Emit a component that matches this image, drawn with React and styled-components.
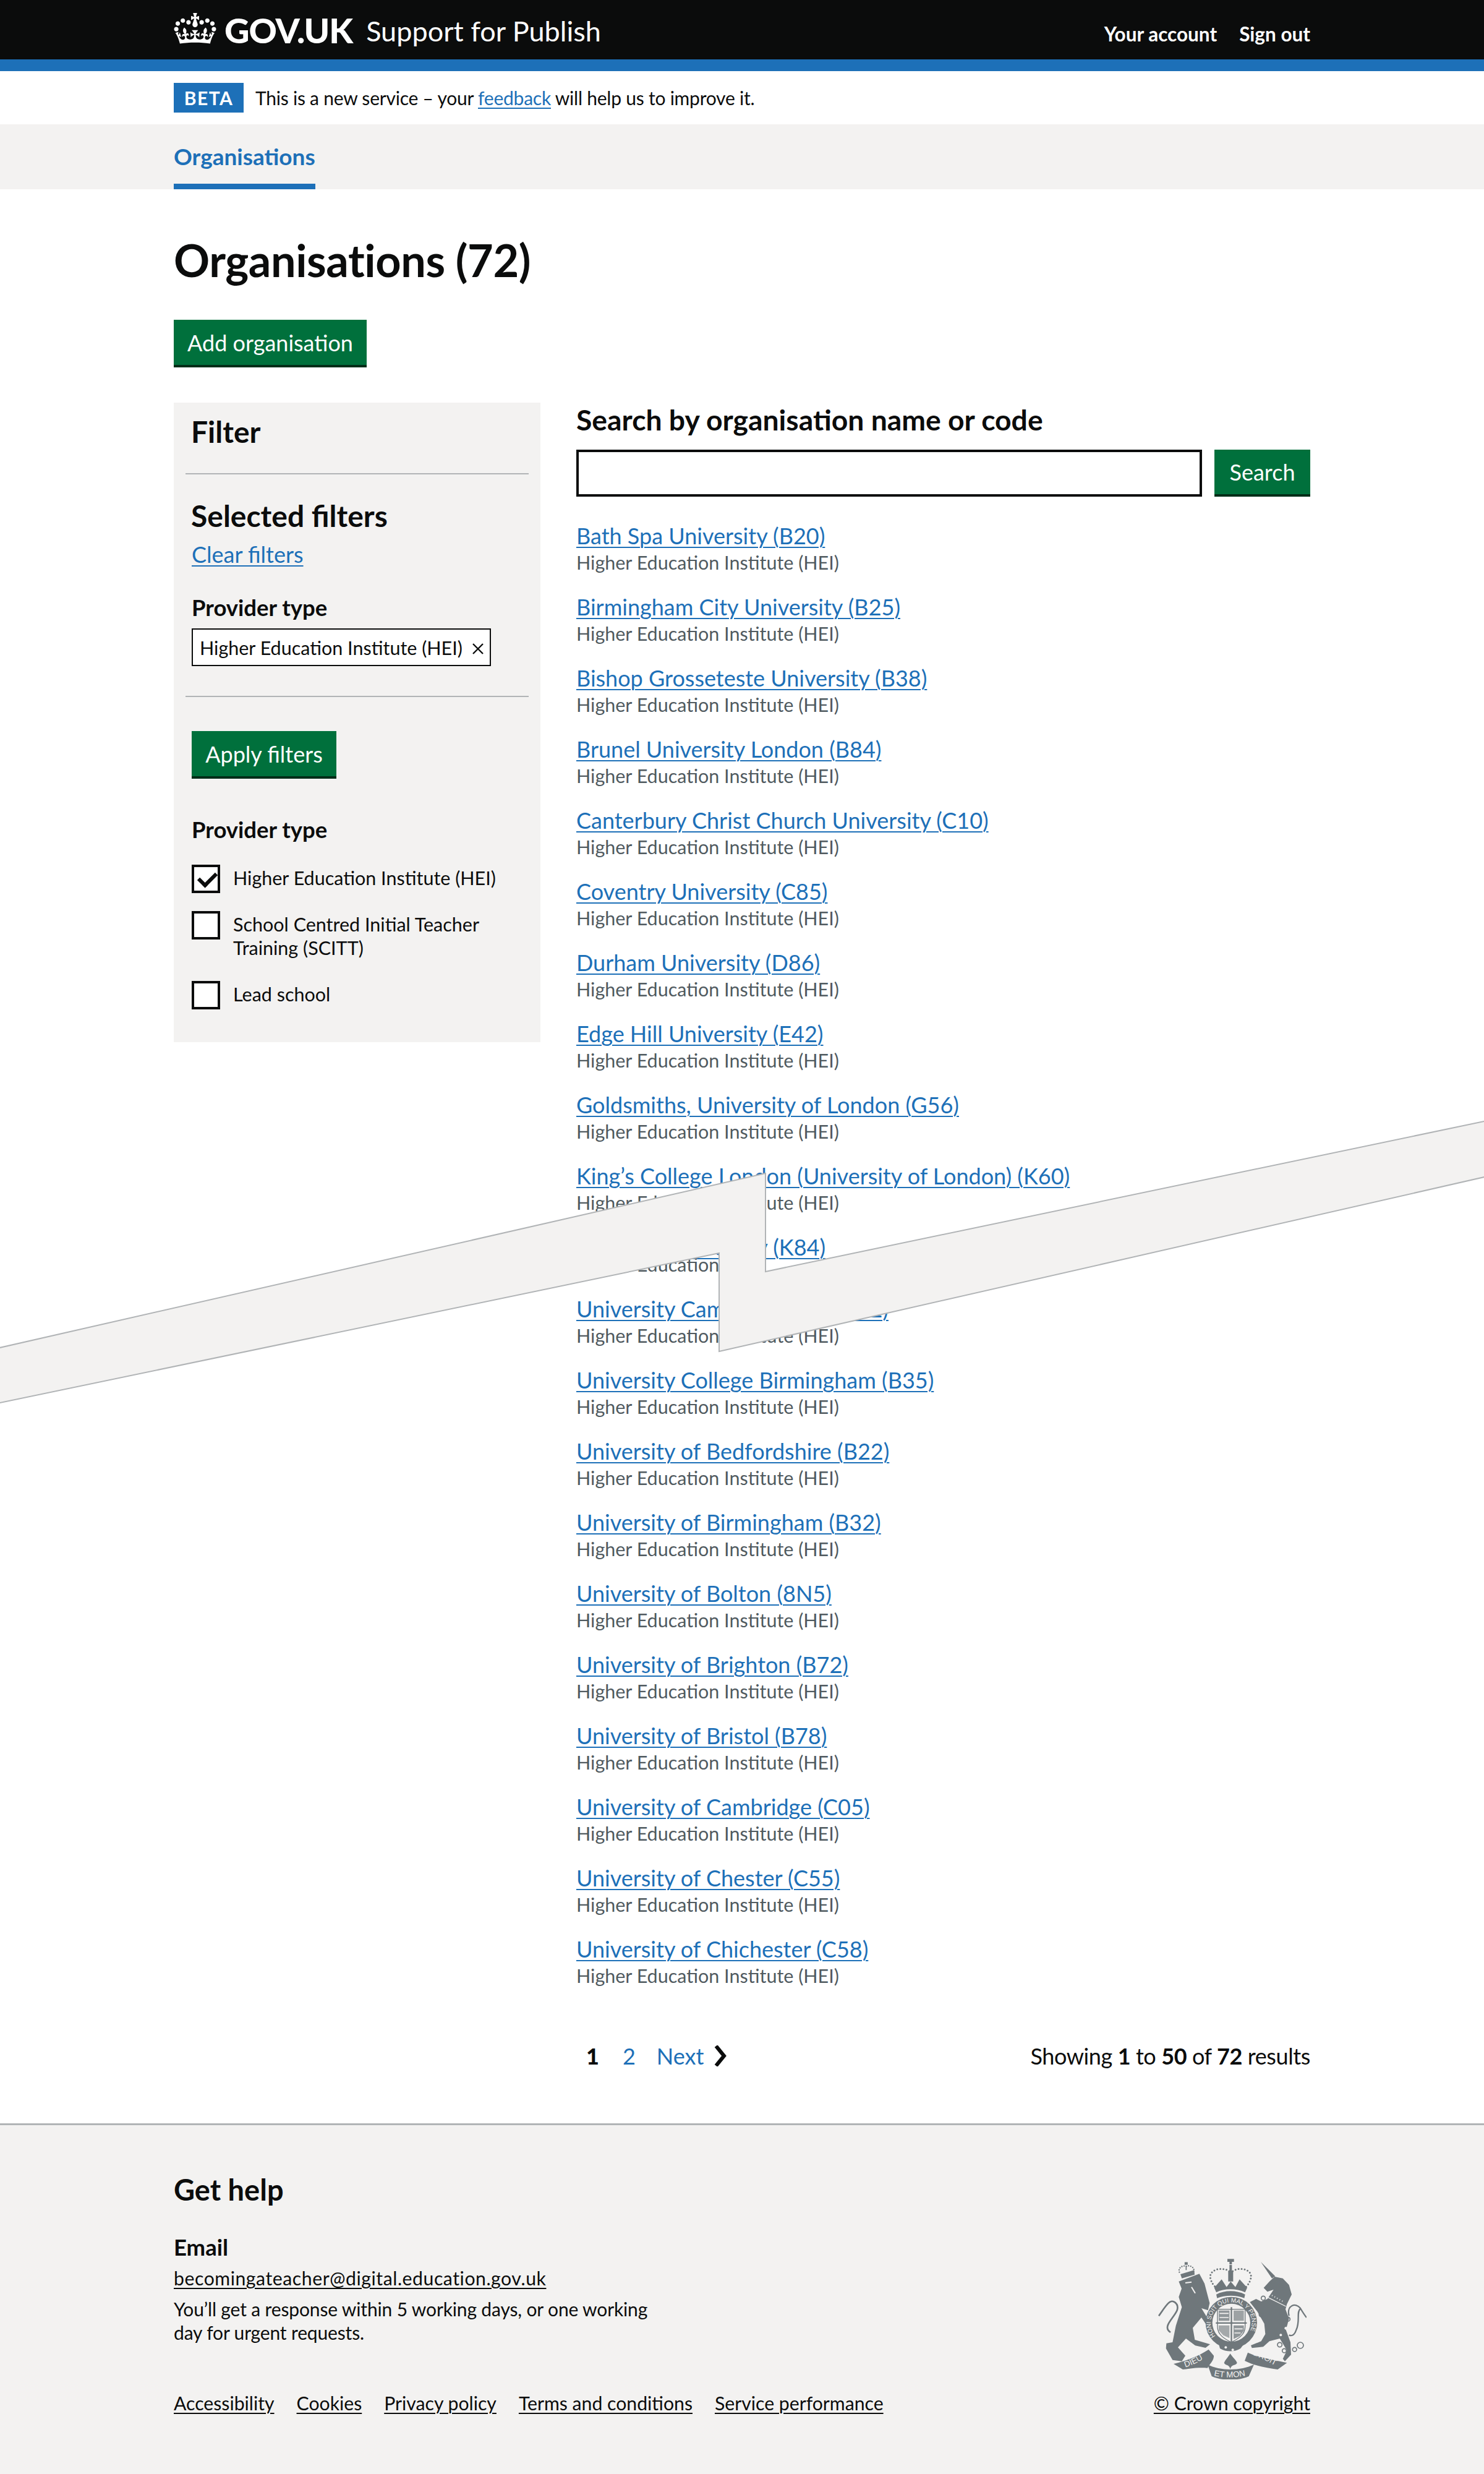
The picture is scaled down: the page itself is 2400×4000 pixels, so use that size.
import React from "react";
import styled, { createGlobalStyle } from "styled-components";

const FONT = `Lato, "Liberation Sans", Arial, sans-serif`;
const BLACK = "#0b0c0c";
const BLUE = "#1d70b8";
const GREY = "#f3f2f1";
const MID = "#b1b4b6";
const SECONDARY = "#505a5f";
const GREEN = "#00703c";
const CREST = "#6f777b";

const GlobalStyle = createGlobalStyle`
  html, body { margin: 0; padding: 0; background: #fff; }
  body { font-family: ${FONT}; color: ${BLACK}; }
  * { box-sizing: border-box; }
`;

const Page = styled.div`
  position: relative;
  width: 2400px;
  height: 4000px;
  overflow: hidden;
  display: flex;
  flex-direction: column;
`;
const Container = styled.div`
  width: 1838px;
  margin: 0 auto;
`;

const HeaderBar = styled.header`
  height: 115px;
  background: ${BLACK};
  border-bottom: 19px solid ${BLUE};
  color: #fff;
`;
const HeaderInner = styled(Container)`
  height: 96px;
  display: flex;
  justify-content: space-between;
  align-items: center;
`;
const Brand = styled.div`
  display: flex;
  align-items: center;
`;
const Crown = styled.svg`
  width: 69px;
  height: 50px;
  margin: -4px 13px 0 0;
  fill: currentColor;
`;
const LogoText = styled.span`
  font-size: 56px;
  font-weight: 900;
  letter-spacing: -1px;
  margin-right: 22px;
`;
const ServiceName = styled.span`
  font-size: 45px;
  line-height: 56px;
  padding-top: 4px;
`;
const HeaderNav = styled.nav`
  display: flex;
  gap: 36px;
  padding-top: 14px;
`;
const HeaderLink = styled.a`
  color: #fff;
  font-size: 31.5px;
  font-weight: 700;
`;

const PhaseBanner = styled.div`
  height: 86px;
`;
const PhaseInner = styled(Container)`
  height: 86px;
  display: flex;
  align-items: center;
  gap: 19px;
  font-size: 30px;
  letter-spacing: -0.23px;
`;
const PhaseTag = styled.strong`
  width: 113px;
  height: 48px;
  background: ${BLUE};
  color: #fff;
  font-size: 30px;
  letter-spacing: 1.5px;
  display: flex;
  align-items: center;
  justify-content: center;
`;
const TextLink = styled.a`
  color: ${BLUE};
  text-decoration: underline;
  text-decoration-thickness: 2px;
  text-underline-offset: 4px;
`;

const NavBar = styled.div`
  height: 105px;
  background: ${GREY};
`;
const NavTab = styled.a`
  display: inline-block;
  height: 105px;
  width: 229px;
  padding-top: 27px;
  border-bottom: 9px solid ${BLUE};
  color: ${BLUE};
  font-size: 37px;
  line-height: 50px;
  font-weight: 700;
`;

const Main = styled(Container)`
  padding-top: 64px;
`;
const Title = styled.h1`
  margin: 0 0 47px;
  font-size: 72px;
  line-height: 100px;
  font-weight: 700;
  letter-spacing: -0.4px;
`;
const Button = styled.button`
  display: block;
  width: ${(p) => p.$width}px;
  height: ${(p) => p.$height || 77}px;
  border: 0;
  padding: 0 0 4px;
  background: ${GREEN};
  box-shadow: inset 0 -4px 0 #002d18;
  color: #fff;
  font-family: ${FONT};
  font-size: 36px;
`;
const Columns = styled.div`
  display: flex;
  align-items: flex-start;
  gap: 58px;
  margin-top: 57px;
`;

const Sidebar = styled.aside`
  width: 593px;
  flex: none;
  height: 1034px;
  background: ${GREY};
  padding: 0 19px;
`;
const FilterHead = styled.div`
  height: 116px;
  padding: 19px 10px 0;
  border-bottom: 2px solid ${MID};
`;
const FilterSelected = styled.div`
  height: 360px;
  padding: 39px 11px 0 10px;
  border-bottom: 2px solid ${MID};
`;
const FilterOptions = styled.div`
  padding: 55px 10px 0;
`;
const PanelHeading = styled.h2`
  margin: 0 0 0 -1px;
  font-size: 48px;
  line-height: 56px;
  font-weight: 700;
`;
const ClearLink = styled(TextLink)`
  display: block;
  font-size: 36px;
  line-height: 50px;
  margin-top: 9px;
`;
const SmallHeading = styled.h3`
  margin: ${(p) => p.$top}px 0 0;
  font-size: 36.5px;
  line-height: 46px;
  font-weight: 700;
`;
const FilterTag = styled.div`
  display: flex;
  align-items: center;
  justify-content: space-between;
  width: 484px;
  height: 61px;
  margin-top: 11px;
  padding: 0 9px 0 11px;
  background: #fff;
  border: 2px solid ${BLACK};
  font-size: 30.5px;
`;
const TagCross = styled.svg`
  width: 20px;
  height: 20px;
  margin-top: 4px;
  stroke: ${BLACK};
  stroke-width: 2.4;
`;
const CheckList = styled.div`
  margin-top: 34px;
`;
const CheckRow = styled.label`
  display: flex;
  gap: 21px;
  margin-bottom: ${(p) => p.$gap}px;
  font-size: 30.5px;
  line-height: 38px;
`;
const CheckBox = styled.span`
  position: relative;
  width: 46px;
  height: 46px;
  flex: none;
  background: #fff;
  border: 4px solid ${BLACK};
  ${(p) =>
    p.$checked &&
    `&::after {
      content: "";
      position: absolute;
      left: 7px;
      top: 8px;
      width: 23px;
      height: 12px;
      border: solid ${BLACK};
      border-width: 0 0 6px 6px;
      transform: rotate(-45deg);
    }`}
`;
const CheckText = styled.span`
  display: block;
  padding-top: 2px;
`;

const Results = styled.div`
  flex: 1;
`;
const SearchLabel = styled.h2`
  margin: 0;
  font-size: 46.3px;
  line-height: 54px;
  font-weight: 700;
`;
const SearchRow = styled.div`
  display: flex;
  gap: 20px;
  margin-top: 22px;
`;
const SearchInput = styled.input`
  width: 1012px;
  height: 76px;
  border: 4px solid ${BLACK};
  background: #fff;
  border-radius: 0;
`;
const OrgList = styled.div`
  display: flex;
  flex-direction: column;
  gap: 29px;
  margin-top: 40px;
`;
const OrgRow = styled.div`
  height: ${(p) => (p.$torn ? 71 : 86)}px;
`;
const OrgLink = styled(TextLink)`
  display: block;
  width: fit-content;
  font-size: 36px;
  line-height: 46px;
`;
const OrgType = styled.div`
  font-size: 30.5px;
  line-height: 40px;
  color: ${SECONDARY};
`;
/* the row that the torn edge runs through: only its left part has slipped up */
const TornType = styled(OrgType)`
  line-height: 10px;
  clip-path: inset(-30px calc(100% - 231px) -30px 0);
`;
const PagerRow = styled.div`
  display: flex;
  justify-content: space-between;
  align-items: center;
  height: 50px;
  margin: 85px 0 84px;
  padding-left: 16px;
  font-size: 36px;
`;
const Pager = styled.div`
  display: flex;
  align-items: center;
`;
const PageCurrent = styled.strong`
  margin-right: 38px;
  font-weight: 900;
`;
const PageLink = styled.a`
  color: ${BLUE};
  margin-right: ${(p) => p.$gap}px;
`;
const Chevron = styled.svg`
  width: 22px;
  height: 34px;
  fill: none;
  stroke: ${BLACK};
  stroke-width: 6;
`;
const PagerSummary = styled.span`
  letter-spacing: -0.4px;
`;

const Tear = styled.svg`
  position: absolute;
  left: 0;
  top: 1800px;
  width: 2400px;
  height: 480px;
  fill: ${GREY};
  stroke: ${MID};
  stroke-width: 2;
`;

const Footer = styled.footer`
  flex: 1;
  background: ${GREY};
  border-top: 3px solid ${MID};
`;
const FooterInner = styled(Container)`
  display: flex;
  justify-content: space-between;
  align-items: flex-end;
  padding-top: 76px;
`;
const FooterHelp = styled.div`
  width: 1200px;
`;
const FooterHeading = styled.h2`
  margin: 0;
  font-size: 47px;
  line-height: 56px;
  font-weight: 700;
`;
const FooterEmail = styled.h3`
  margin: 42px 0 0;
  font-size: 36.5px;
  line-height: 46px;
  font-weight: 700;
`;
const FooterLink = styled.a`
  color: ${BLACK};
  font-size: 30.2px;
  line-height: 40px;
  text-decoration: underline;
  text-decoration-thickness: 2px;
  text-underline-offset: 4px;
`;
const EmailLink = styled(FooterLink)`
  letter-spacing: 0.55px;
`;
const EmailLine = styled.div`
  margin-top: 7px;
  height: 40px;
`;
const FooterText = styled.p`
  width: 800px;
  margin: 11px 0 0;
  font-size: 30px;
  letter-spacing: -0.15px;
  line-height: 38px;
`;
const FooterLinks = styled.div`
  display: flex;
  gap: 36px;
  margin-top: 75px;
`;
const FooterRight = styled.div`
  display: flex;
  flex-direction: column;
  align-items: flex-end;
`;
const CrestSvg = styled.svg`
  width: 240px;
  height: 195px;
  margin: 0 6px 18px 0;
`;

const orgs = [
  "Bath Spa University (B20)",
  "Birmingham City University (B25)",
  "Bishop Grosseteste University (B38)",
  "Brunel University London (B84)",
  "Canterbury Christ Church University (C10)",
  "Coventry University (C85)",
  "Durham University (D86)",
  "Edge Hill University (E42)",
  "Goldsmiths, University of London (G56)",
  "King’s College London (University of London) (K60)",
  "Kingston University (K84)",
  "University Campus Suffolk (S82)",
  "University College Birmingham (B35)",
  "University of Bedfordshire (B22)",
  "University of Birmingham (B32)",
  "University of Bolton (8N5)",
  "University of Brighton (B72)",
  "University of Bristol (B78)",
  "University of Cambridge (C05)",
  "University of Chester (C55)",
  "University of Chichester (C58)",
];

const footerLinks = [
  "Accessibility",
  "Cookies",
  "Privacy policy",
  "Terms and conditions",
  "Service performance",
];

const CREST_TEXT = "Liberation Sans, sans-serif";

// royal arms, drawn in the coordinates of the footer crop
const Crest = () => (
  <CrestSvg viewBox="100 95 720 585" fill={CREST}>
    <defs>
      <path id="garter" d="M378 470 A100 100 0 1 1 532 470" />
      <path id="ribbonL" d="M232 622 Q285 605 335 570" />
      <path id="ribbonM" d="M370 662 Q450 680 535 660" />
      <path id="ribbonR" d="M560 562 Q620 585 682 622" />
    </defs>
    {/* lion */}
    <path d="M200 205 L240 190 L300 168 L325 215 L350 310 L342 345 L310 335 L362 420 L345 432 L310 380 L268 430 L278 488 L352 510 L330 527 L280 516 L235 482 L196 525 L232 565 L215 592 L170 586 L138 530 L140 505 L170 500 L186 420 L215 330 L200 280 L214 240 Z" />
    <path d="M160 452 C118 425 175 385 192 345 C202 312 170 288 150 310 C132 328 118 352 103 372" fill="none" stroke={CREST} strokeWidth="8" />
    <path d="M232 212 L262 208 M262 232 L280 262" stroke={GREY} strokeWidth="6" fill="none" />
    {/* lion crown */}
    <path d="M208 170 L275 150 L277 172 L215 190 Z" />
    <path d="M203 160 C195 135 225 125 237 132 C255 122 280 140 272 158" fill="none" stroke={CREST} strokeWidth="7" strokeLinecap="round" strokeDasharray="0 11" />
    <path d="M231 122 h10 v-8 h-10 z M236 150 v-22" stroke={CREST} strokeWidth="5" />
    {/* unicorn */}
    <path d="M598 110 L668 180 L652 190 Z" />
    <path d="M612 236 L640 205 L665 182 L705 190 L735 222 L748 268 L725 315 L718 340 L735 385 L720 440 L742 500 L745 560 L715 592 L705 580 L725 540 L690 482 L640 495 L610 522 L555 528 L550 515 L600 495 L620 460 L615 410 L582 352 L545 305 L575 290 L600 302 L630 290 L660 245 L630 255 Z" />
    <path d="M735 372 C722 320 768 305 790 335 C800 352 810 368 820 380 M790 338 C770 350 790 400 770 440 C760 470 745 470 735 465" fill="none" stroke={CREST} strokeWidth="7" />
    <path d="M632 282 L720 326" stroke={GREY} strokeWidth="4" fill="none" />
    <path d="M640 266 L712 306" stroke={GREY} strokeWidth="7" strokeDasharray="3 11" fill="none" />
    <g fill="none" stroke={CREST} strokeWidth="5">
      <circle cx="610" cy="286" r="10" />
      <circle cx="600" cy="366" r="10" />
      <circle cx="730" cy="388" r="10" />
      <circle cx="690" cy="512" r="11" />
      <circle cx="712" cy="541" r="10" />
      <circle cx="762" cy="535" r="10" />
      <circle cx="790" cy="515" r="15" />
    </g>
    <circle cx="720" cy="432" r="7" fill={GREY} />
    <circle cx="695" cy="465" r="6" fill={GREY} />
    {/* central crown */}
    <path d="M436 96 h32 v14 h-10 v12 h-12 v-12 h-10 z" />
    <path d="M446 125 h12 v30 h6 v50 h-24 v-50 h6 z" />
    <path d="M445 155 C405 130 340 150 355 195 C362 215 370 225 378 232 M462 155 C500 130 565 150 548 195 C542 215 532 225 526 232" fill="none" stroke={CREST} strokeWidth="9" strokeLinecap="round" strokeDasharray="0 15" />
    <path d="M372 235 L408 195 L432 232 L452 205 L475 232 L495 195 L532 235 L522 258 C480 238 420 238 382 258 Z" />
    <path d="M382 268 C420 246 482 246 522 268 L518 286 C480 270 425 270 386 286 Z" />
    {/* garter and shield */}
    <circle cx="455" cy="405" r="125" />
    <circle cx="455" cy="405" r="92" fill={GREY} />
    <path d="M388 340 H522 V425 C522 465 485 485 455 500 C425 485 388 465 388 425 Z" fill={GREY} stroke={CREST} strokeWidth="4" />
    <path d="M452 330 h7 v175 h-7 z M380 403 h150 v7 h-150 z" />
    <path d="M394 346 h52 v50 h-52 z" opacity="0.75" />
    <path d="M466 346 h50 v50 h-50 z" opacity="0.65" />
    <path d="M394 418 h52 v62 l-30 -14 l-22 -24 z" opacity="0.6" />
    <path d="M466 418 h50 v26 l-20 26 l-30 14 z" opacity="0.75" />
    <path d="M398 360 h44 M398 380 h44 M470 435 h40 M470 455 h30" stroke={GREY} strokeWidth="5" />
    <text fontFamily={CREST_TEXT} fontSize="30" fill={GREY}>
      <textPath href="#garter">HONI SOIT QUI MAL Y PENSE</textPath>
    </text>
    <path d="M395 512 C430 530 480 530 515 510 L500 530 C470 548 430 548 400 530 Z" />
    <circle cx="428" cy="525" r="6" fill={GREY} />
    <circle cx="462" cy="537" r="6" fill={GREY} />
    {/* motto */}
    <path d="M175 605 C240 590 300 565 345 535 L370 565 C372 590 345 610 340 625 C290 620 240 630 220 632 Z" />
    <path d="M340 608 C400 640 500 640 565 608 L540 665 C490 688 410 688 360 665 Z" />
    <path d="M535 550 C590 575 660 585 725 600 L680 632 C630 625 570 615 520 590 Z" />
    <path d="M450 555 C438 575 425 585 420 600 C425 615 445 605 450 630 C455 605 478 615 483 600 C478 585 462 575 450 555 Z" />
    <text fontFamily={CREST_TEXT} fontSize="40" fill={GREY}>
      <textPath href="#ribbonL">DIEU</textPath>
    </text>
    <text fontFamily={CREST_TEXT} fontSize="40" fill={GREY}>
      <textPath href="#ribbonM">ET MON</textPath>
    </text>
    <text fontFamily={CREST_TEXT} fontSize="38" fill={GREY}>
      <textPath href="#ribbonR">DROIT</textPath>
    </text>
  </CrestSvg>
);

export default function App() {
  return (
    <Page>
      <GlobalStyle />
      <HeaderBar>
        <HeaderInner>
          <Brand>
            <Crown viewBox="0 0 132 97">
              <path
                fillRule="evenodd"
                d="M25 30.2c3.5 1.5 7.7-.2 9.1-3.7 1.5-3.6-.2-7.8-3.9-9.2-3.6-1.4-7.6.3-9.1 3.9-1.4 3.5.3 7.5 3.9 9zM9 39.5c3.6 1.5 7.8-.2 9.2-3.7 1.5-3.6-.2-7.8-3.9-9.1-3.6-1.5-7.6.2-9.1 3.8-1.4 3.5.3 7.5 3.8 9zM4.4 57.2c3.5 1.5 7.7-.2 9.1-3.8 1.5-3.6-.2-7.7-3.9-9.1-3.5-1.5-7.6.3-9.1 3.8-1.4 3.5.3 7.6 3.9 9.1zm38.3-21.4c3.5 1.5 7.7-.2 9.1-3.8 1.5-3.6-.2-7.7-3.9-9.1-3.6-1.5-7.6.3-9.1 3.8-1.3 3.6.4 7.7 3.9 9.1zm64.4-5.6c-3.6 1.5-7.8-.2-9.1-3.7-1.5-3.6.2-7.8 3.8-9.2 3.6-1.4 7.7.3 9.2 3.9 1.3 3.5-.4 7.5-3.9 9zm15.9 9.3c-3.6 1.5-7.7-.2-9.1-3.7-1.5-3.6.2-7.8 3.7-9.1 3.6-1.5 7.7.2 9.2 3.8 1.5 3.5-.3 7.5-3.8 9zm4.7 17.7c-3.6 1.5-7.8-.2-9.2-3.8-1.5-3.6.2-7.7 3.9-9.1 3.6-1.5 7.7.3 9.2 3.8 1.3 3.5-.4 7.6-3.9 9.1zM89.3 35.8c-3.6 1.5-7.8-.2-9.2-3.8-1.4-3.6.2-7.7 3.9-9.1 3.6-1.5 7.7.3 9.2 3.8 1.4 3.6-.3 7.7-3.9 9.1zM69.7 17.7l8.9 4.7V9.3l-8.9 2.8c-.2-.3-.5-.6-.9-.9L72.4 0H59.6l3.5 11.2c-.3.3-.6.5-.9.9l-8.8-2.8v13.1l8.8-4.7c.3.3.6.7.9.9l-5 15.4v.1c-.2.8-.4 1.6-.4 2.4 0 4.1 3.1 7.5 7 8.1h.2c.3 0 .7.1 1 .1.4 0 .7 0 1-.1h.2c4-.6 7.1-4.1 7.1-8.1 0-.8-.1-1.7-.4-2.4V34l-5.1-15.4c.4-.2.7-.6 1-.9zM66 92.8c16.9 0 32.8 1.1 47.1 3.2 4-16.9 8.9-26.7 14-33.5l-9.6-3.4c1 4.9 1.1 7.2 0 10.2-1.5-1.4-3-4.3-4.2-8.7L108.6 76c2.8-2 5-3.2 7.5-3.3-4.4 9.4-10 11.9-13.6 11.2-4.3-.8-6.3-4.6-5.6-7.9 1-4.7 5.7-5.9 8-.5 4.3-8.7-3-11.4-7.6-8.8 7.1-7.2 7.9-13.5 2.1-21.1-8 6.1-8.1 12.3-4.5 20.8-4.7-5.4-12.1-2.5-9.5 6.2 3.4-5.2 7.9-2 7.2 3.1-.6 4.3-6.4 7.8-13.5 7.2-10.3-.9-10.9-8-11.2-13.8 2.5-.5 7.1 1.8 11 7.3L80.2 60c-4.1 4.4-8 5.3-12.3 5.4 1.4-4.4 8-11.6 8-11.6H55.5s6.4 7.2 7.9 11.6c-4.2-.1-8-1-12.3-5.4l1.4 16.4c3.9-5.5 8.5-7.7 10.9-7.3-.3 5.8-.9 12.8-11.1 13.8-7.2.6-12.9-2.9-13.5-7.2-.7-5 3.8-8.3 7.1-3.1 2.7-8.7-4.6-11.6-9.4-6.2 3.7-8.5 3.6-14.7-4.6-20.8-5.8 7.6-5 13.9 2.2 21.1-4.7-2.6-11.9.1-7.7 8.8 2.3-5.5 7.1-4.2 8.1.5.7 3.3-1.3 7.1-5.7 7.9-3.5.7-9-1.8-13.5-11.2 2.5.1 4.7 1.3 7.5 3.3l-4.7-15.4c-1.2 4.4-2.7 7.2-4.3 8.7-1.1-3-.9-5.3 0-10.2l-9.5 3.4c5 6.9 9.9 16.7 14 33.5 14.8-2.1 30.8-3.2 47.7-3.2z"
              />
            </Crown>
            <LogoText>GOV.UK</LogoText>
            <ServiceName>Support for Publish</ServiceName>
          </Brand>
          <HeaderNav>
            <HeaderLink>Your account</HeaderLink>
            <HeaderLink>Sign out</HeaderLink>
          </HeaderNav>
        </HeaderInner>
      </HeaderBar>

      <PhaseBanner>
        <PhaseInner>
          <PhaseTag>BETA</PhaseTag>
          <span>
            This is a new service – your <TextLink>feedback</TextLink> will help us to improve it.
          </span>
        </PhaseInner>
      </PhaseBanner>

      <NavBar>
        <Container>
          <NavTab>Organisations</NavTab>
        </Container>
      </NavBar>

      <Main>
        <Title>Organisations (72)</Title>
        <Button $width={312}>Add organisation</Button>
        <Columns>
          <Sidebar>
            <FilterHead>
              <PanelHeading>Filter</PanelHeading>
            </FilterHead>
            <FilterSelected>
              <PanelHeading>Selected filters</PanelHeading>
              <ClearLink>Clear filters</ClearLink>
              <SmallHeading $top={38}>Provider type</SmallHeading>
              <FilterTag>
                Higher Education Institute (HEI)
                <TagCross viewBox="0 0 20 20">
                  <path d="M2 2 L18 18 M18 2 L2 18" />
                </TagCross>
              </FilterTag>
            </FilterSelected>
            <FilterOptions>
              <Button $width={234}>Apply filters</Button>
              <SmallHeading $top={59}>Provider type</SmallHeading>
              <CheckList>
                <CheckRow $gap={29}>
                  <CheckBox $checked />
                  <CheckText>Higher Education Institute (HEI)</CheckText>
                </CheckRow>
                <CheckRow $gap={35}>
                  <CheckBox />
                  <CheckText>
                    School Centred Initial Teacher
                    <br />
                    Training (SCITT)
                  </CheckText>
                </CheckRow>
                <CheckRow $gap={0}>
                  <CheckBox />
                  <CheckText>Lead school</CheckText>
                </CheckRow>
              </CheckList>
            </FilterOptions>
          </Sidebar>

          <Results>
            <SearchLabel>Search by organisation name or code</SearchLabel>
            <SearchRow>
              <SearchInput />
              <Button $width={155} $height={76}>Search</Button>
            </SearchRow>
            <OrgList>
              {orgs.map((name, i) => (
                <OrgRow key={name} $torn={i === 10}>
                  <OrgLink>{name}</OrgLink>
                  {i === 10 ? (
                    <TornType>Higher Education Institute (HEI)</TornType>
                  ) : (
                    <OrgType>Higher Education Institute (HEI)</OrgType>
                  )}
                </OrgRow>
              ))}
            </OrgList>
            <PagerRow>
              <Pager>
                <PageCurrent>1</PageCurrent>
                <PageLink $gap={34}>2</PageLink>
                <PageLink $gap={16}>Next</PageLink>
                <Chevron viewBox="0 0 22 34">
                  <path d="M4 1 L17 17 L4 33" />
                </Chevron>
              </Pager>
              <PagerSummary>
                Showing <strong>1</strong> to <strong>50</strong> of <strong>72</strong> results
              </PagerSummary>
            </PagerRow>
          </Results>
        </Columns>
      </Main>

      <Tear viewBox="0 1800 2400 480">
        <path d="M-5 2180 L1238 1897 V2056 L2405 1812 V1902 L1163 2185 V2026 L-5 2269 Z" />
      </Tear>

      <Footer>
        <FooterInner>
          <FooterHelp>
            <FooterHeading>Get help</FooterHeading>
            <FooterEmail>Email</FooterEmail>
            <EmailLine>
              <EmailLink>becomingateacher@digital.education.gov.uk</EmailLink>
            </EmailLine>
            <FooterText>You’ll get a response within 5 working days, or one working day for urgent requests.</FooterText>
            <FooterLinks>
              {footerLinks.map((l) => (
                <FooterLink key={l}>{l}</FooterLink>
              ))}
            </FooterLinks>
          </FooterHelp>
          <FooterRight>
            <Crest />
            <FooterLink>© Crown copyright</FooterLink>
          </FooterRight>
        </FooterInner>
      </Footer>
    </Page>
  );
}
